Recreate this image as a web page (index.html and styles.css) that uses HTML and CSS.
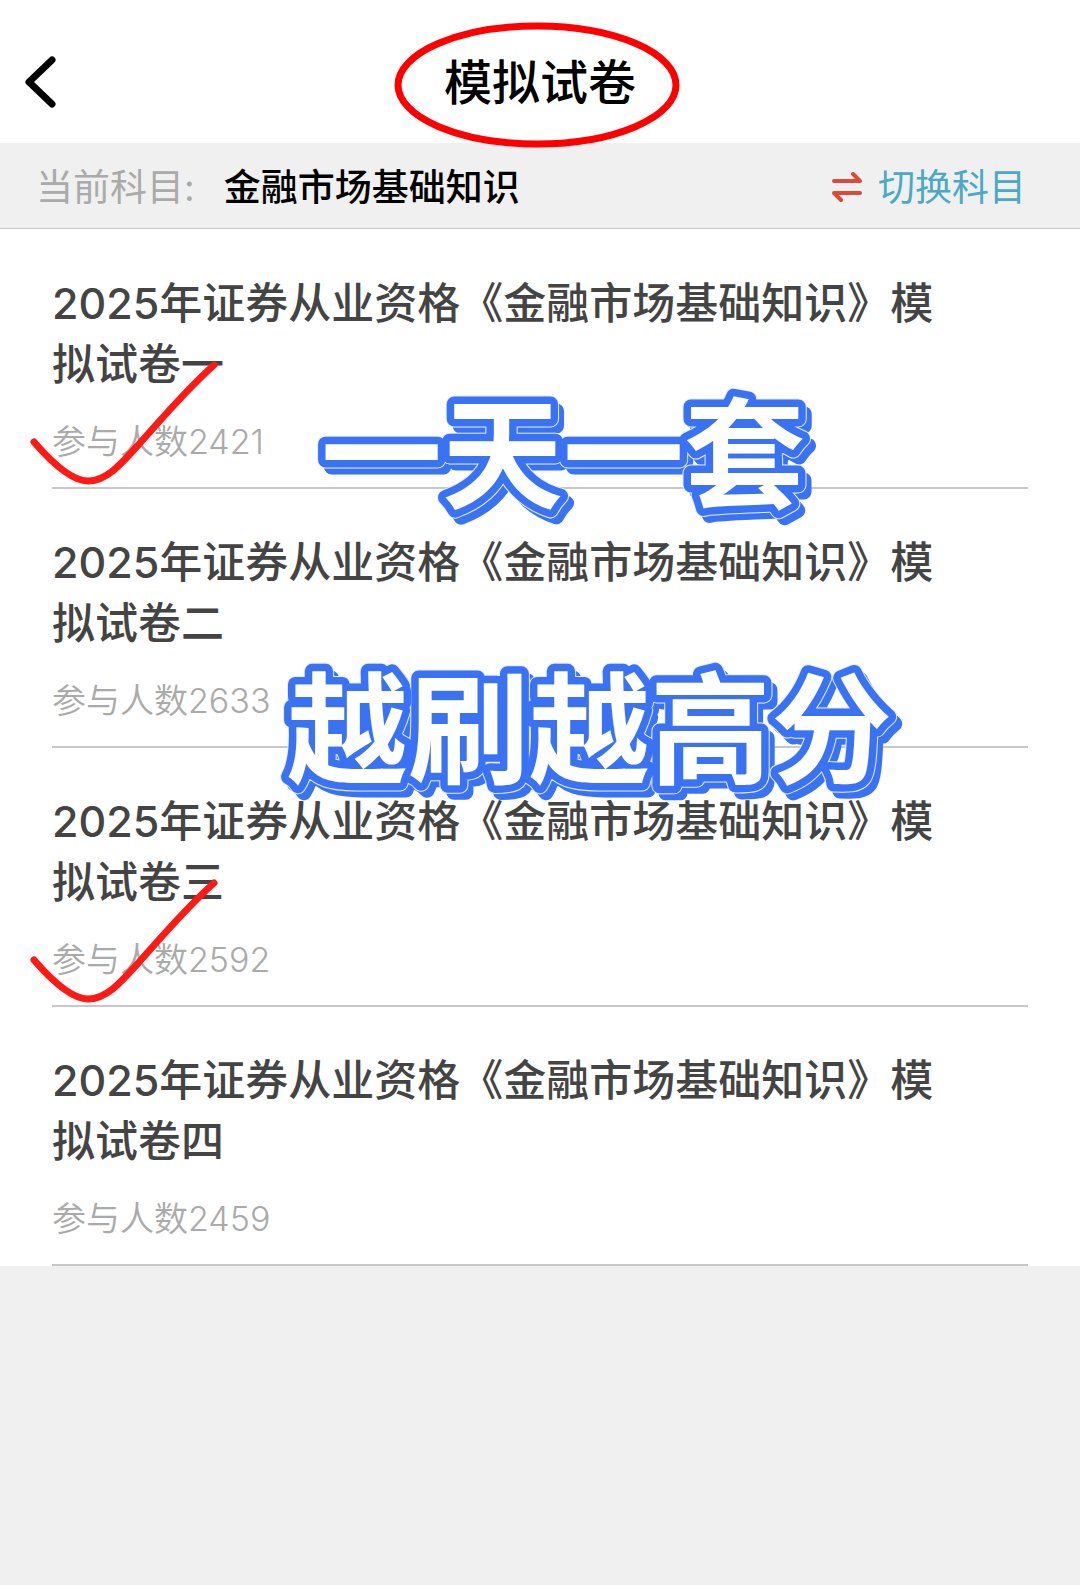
FILE: index.html
```html
<!DOCTYPE html>
<html lang="zh-CN">
<head>
    <meta charset="UTF-8">
    <meta name="viewport" content="width=device-width, initial-scale=1.0">
    <title>模拟试卷</title>
    <link rel="stylesheet" href="styles.css">
</head>
<body>
    <header class="header">
        <button type="button" class="back-btn" aria-label="返回">
            <svg width="34" height="54" viewBox="0 0 34 54">
                <path d="M28 5L5 27L28 49" />
            </svg>
        </button>
        <h1>模拟试卷</h1>
        <svg class="circle-mark" width="288" height="126" viewBox="0 0 288 126">
            <ellipse cx="144" cy="63" rx="139" ry="59" />
        </svg>
    </header>

    <div class="subject-bar">
        <span class="subject-label">当前科目:</span>
        <span class="subject-name">金融市场基础知识</span>
        <button type="button" class="switch-btn">
            <svg width="30" height="32" viewBox="0 0 30 32">
                <path d="M2 9H28L21 2M28 21H2L9 28" />
            </svg>
            切换科目
        </button>
    </div>

    <main class="paper-area">
        <ul class="paper-list">
            <li>
                <h2>2025年证券从业资格《金融市场基础知识》模拟试卷一</h2>
                <p>参与人数2421</p>
                <svg class="check-mark" width="190" height="126" viewBox="0 0 190 126">
                    <path d="M5 82C24 104 43 121 59 121C78 121 93 103 111 83C136 55 158 29 185 5" />
                </svg>
            </li>
            <li>
                <h2>2025年证券从业资格《金融市场基础知识》模拟试卷二</h2>
                <p>参与人数2633</p>
            </li>
            <li>
                <h2>2025年证券从业资格《金融市场基础知识》模拟试卷三</h2>
                <p>参与人数2592</p>
                <svg class="check-mark" width="190" height="126" viewBox="0 0 190 126">
                    <path d="M5 82C24 104 43 121 59 121C78 121 93 103 111 83C136 55 158 29 185 5" />
                </svg>
            </li>
            <li>
                <h2>2025年证券从业资格《金融市场基础知识》模拟试卷四</h2>
                <p>参与人数2459</p>
            </li>
        </ul>

        <!-- 艺术字标语 -->
        <svg class="slogan" width="660" height="460" viewBox="0 0 660 460">
            <defs>
                <g id="slogan-text">
                    <text x="51" y="140">一天一套</text>
                    <text x="17" y="415">越刷越高分</text>
                </g>
            </defs>
            <use href="#slogan-text" class="slogan-shadow" x="6" y="7" />
            <use href="#slogan-text" class="slogan-line" />
            <use href="#slogan-text" class="slogan-stroke" />
            <use href="#slogan-text" class="slogan-fill" />
        </svg>
    </main>
</body>
</html>
```

FILE: styles.css
```css
body {
    margin: 0;
    min-height: 100vh;
    background-color: #f0f0f0;
    font-family: "Inter", "Noto Sans CJK SC", sans-serif;
}

button {
    padding: 0;
    border: none;
    background: none;
    font-family: inherit;
    cursor: pointer;
}

svg {
    display: block;
    fill: none;
    stroke-linecap: round;
    stroke-linejoin: round;
}

/* ================= 顶部标题栏 ================= */
.header {
    position: relative;
    display: flex;
    align-items: center;
    justify-content: center;
    height: 143px;
    padding-top: 22px;
    box-sizing: border-box;
    background-color: #fff;
}

.header h1 {
    margin: 0;
    font-size: 48px;
    font-weight: 500;
    line-height: 60px;
    color: #000;
}

.back-btn {
    position: absolute;
    left: 24px;
    top: 55px;
}

.back-btn svg {
    stroke: #000;
    stroke-width: 7;
}

/* 标题红圈 */
.circle-mark {
    position: absolute;
    left: 50%;
    top: 22px;
    margin-left: -147px;
    stroke: #fe0000;
    stroke-width: 7;
    z-index: 1;
}

/* ================= 当前科目 ================= */
.subject-bar {
    display: flex;
    align-items: center;
    height: 86px;
    padding: 4px 54px 0 36px;
    box-sizing: border-box;
    border-bottom: 1px solid #c8c8c8;
    font-size: 37px;
    line-height: 48px;
}

.subject-label {
    color: #aaa;
}

.subject-name {
    margin-left: 29px;
    font-weight: 500;
    color: #000;
}

.switch-btn {
    display: flex;
    align-items: center;
    gap: 16px;
    margin-left: auto;
    font-size: 37px;
    line-height: 48px;
    color: #4aa9c5;
}

.switch-btn svg {
    stroke: #dc4a38;
    stroke-width: 4;
}

/* ================= 试卷列表 ================= */
.paper-area {
    position: relative;
    background-color: #fff;
}

.paper-list {
    margin: 0;
    padding: 1px 52px 0;
    list-style: none;
}

.paper-list li {
    position: relative;
    height: 259px;
    padding-top: 43px;
    box-sizing: border-box;
    border-bottom: 2px solid #c8c8c8;
}

.paper-list h2 {
    margin: 0;
    padding-right: 64px;
    font-size: 43px;
    font-weight: 500;
    line-height: 61px;
    color: #444;
}

.paper-list p {
    margin: 22px 0 0;
    font-size: 34px;
    font-weight: 350;
    line-height: 50px;
    color: #aaa;
}

/* 红色对勾 */
.check-mark {
    position: absolute;
    left: -23px;
    top: 130px;
    stroke: #fd1a14;
    stroke-width: 7;
}

/* ================= 标语 ================= */
.slogan {
    position: absolute;
    left: 50%;
    top: 130px;
    margin-left: -270px;
    font-size: 121px;
    font-weight: 700;
    font-family: "Noto Sans CJK SC", sans-serif;
}

.slogan-shadow {
    fill: #3a72f4;
    stroke: #3a72f4;
    stroke-width: 15;
}

.slogan-line {
    stroke: #e4ecff;
    stroke-width: 17;
}

.slogan-stroke {
    stroke: #3a72f4;
    stroke-width: 15;
}

.slogan-fill {
    fill: #fff;
}
```
